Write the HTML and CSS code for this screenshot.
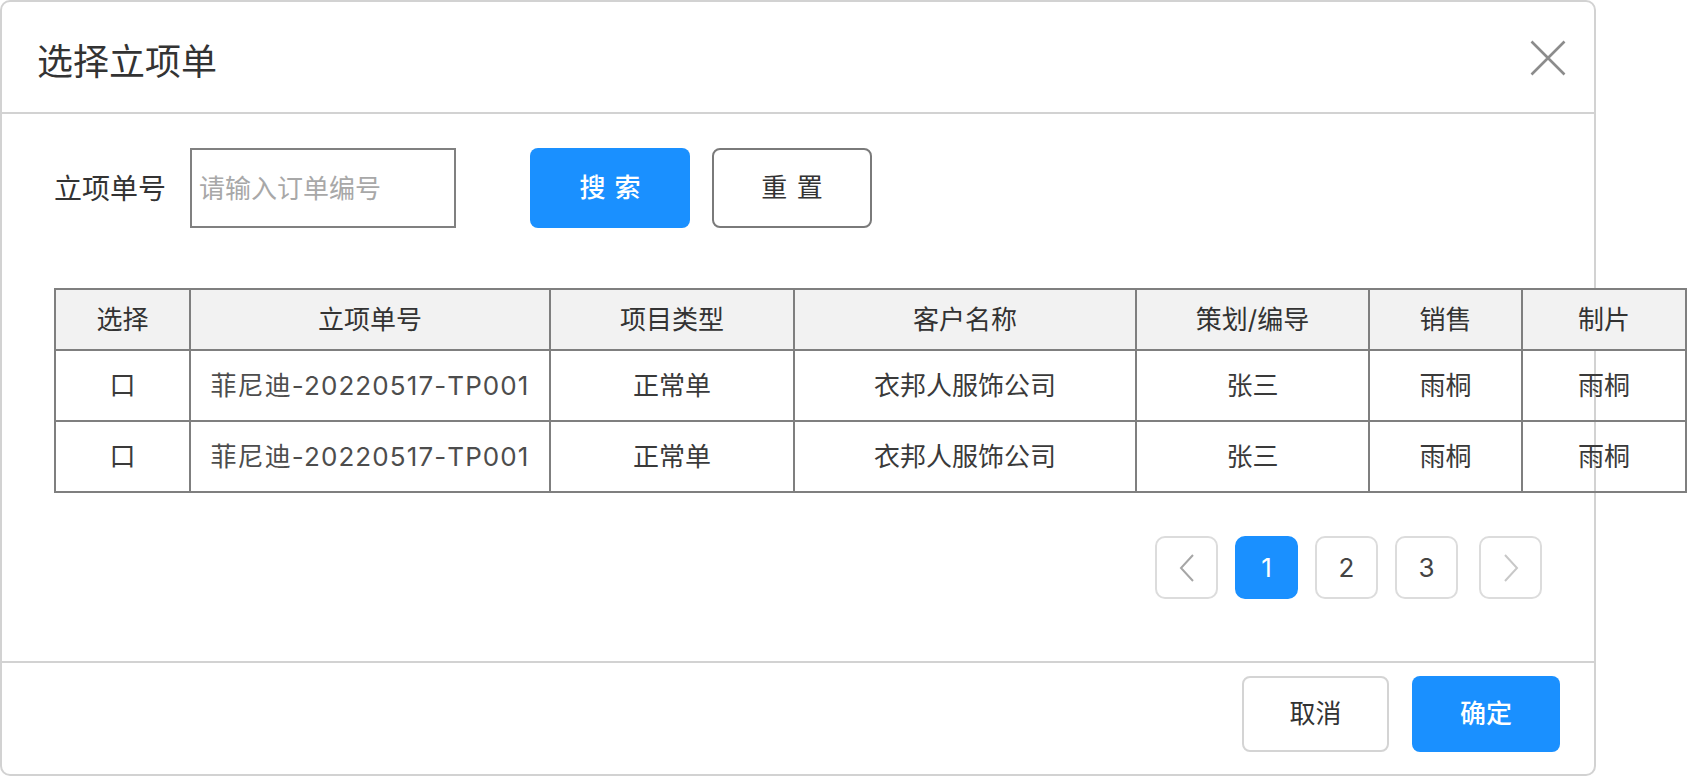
FILE: index.html
```html
<!DOCTYPE html>
<html lang="zh-CN">
<head>
<meta charset="utf-8">
<title>选择立项单</title>
<link rel="stylesheet" href="styles.css">
</head>
<body>
<div class="dialog">
  <div class="dialog-header">
    <h2 class="dialog-title">选择立项单</h2>
    <button class="close-btn" aria-label="关闭">
      <svg width="36" height="36" viewBox="0 0 36 36"><path d="M1.5 1.5 L34.5 34.5 M34.5 1.5 L1.5 34.5" stroke="#8c8c8c" stroke-width="2.6" fill="none"/></svg>
    </button>
  </div>
  <div class="dialog-body">
    <div class="search-row">
      <label class="search-label">立项单号</label>
      <input class="search-input" type="text" placeholder="请输入订单编号">
      <button class="btn btn-primary btn-search">搜 索</button>
      <button class="btn btn-outline btn-reset">重 置</button>
    </div>
    <table class="data-table">
      <colgroup>
        <col class="c1"><col class="c2"><col class="c3"><col class="c4"><col class="c5"><col class="c6"><col class="c7">
      </colgroup>
      <thead>
        <tr><th>选择</th><th>立项单号</th><th>项目类型</th><th>客户名称</th><th>策划/编导</th><th>销售</th><th>制片</th></tr>
      </thead>
      <tbody>
        <tr><td class="check">口</td><td class="code">菲尼迪-20220517-TP001</td><td>正常单</td><td>衣邦人服饰公司</td><td>张三</td><td>雨桐</td><td>雨桐</td></tr>
        <tr><td class="check">口</td><td class="code">菲尼迪-20220517-TP001</td><td>正常单</td><td>衣邦人服饰公司</td><td>张三</td><td>雨桐</td><td>雨桐</td></tr>
      </tbody>
    </table>
    <div class="pagination">
      <button class="page-item page-prev" aria-label="上一页">
        <svg width="16" height="28" viewBox="0 0 16 28"><path d="M14 1 L2 14 L14 27" stroke="#a6a6a6" stroke-width="2" fill="none"/></svg>
      </button>
      <button class="page-item active">1</button>
      <button class="page-item">2</button>
      <button class="page-item">3</button>
      <button class="page-item page-next" aria-label="下一页">
        <svg width="16" height="28" viewBox="0 0 16 28"><path d="M2 1 L14 14 L2 27" stroke="#c8c8c8" stroke-width="2" fill="none"/></svg>
      </button>
    </div>
  </div>
  <div class="dialog-footer">
    <button class="btn btn-light btn-cancel">取消</button>
    <button class="btn btn-primary btn-confirm">确定</button>
  </div>
</div>
</body>
</html>
```
FILE: styles.css
```css
* { box-sizing: border-box; }
html, body { margin: 0; padding: 0; background: #fff; }
body {
  font-family: Inter, "Noto Sans CJK SC", sans-serif;
  color: #333;
  overflow: hidden;
}
button { font-family: inherit; cursor: pointer; }

.dialog {
  width: 1596px;
  height: 776px;
  border: 2px solid #d2d2d2;
  border-radius: 10px;
  background: #fff;
  display: flex;
  flex-direction: column;
}

.dialog-header {
  height: 112px;
  flex: none;
  border-bottom: 2px solid #d2d2d2;
  display: flex;
  align-items: center;
  justify-content: space-between;
  padding: 6px 28px 0 35px;
}
.dialog-title {
  margin: 0;
  font-size: 36px;
  font-weight: 400;
  line-height: 1;
  color: #333;
  margin-top: 4px;
}
.close-btn {
  border: 0;
  background: none;
  padding: 0;
  width: 36px;
  height: 36px;
  display: block;
  margin-bottom: 4px;
}
.close-btn svg { display: block; }

.dialog-body {
  flex: 1;
  padding: 34px 0 0 52px;
}

.search-row {
  display: flex;
  align-items: center;
  height: 80px;
}
.search-label {
  font-size: 28px;
  color: #333;
  line-height: 1;
  padding-top: 2px;
}
.search-input {
  margin-left: 24px;
  width: 266px;
  height: 80px;
  border: 2px solid #808080;
  border-radius: 0;
  padding: 0 0 0 7px;
  font-family: inherit;
  font-size: 26px;
  color: #333;
  outline: none;
}
.search-input::placeholder { color: #a8a8a8; }

.btn {
  border-radius: 8px;
  font-size: 26px;
  line-height: 1;
  padding: 0;
}
.btn-primary {
  background: #1a90ff;
  border: 0;
  color: #fff;
  font-weight: 500;
}
.btn-search {
  margin-left: 74px;
  width: 160px;
  height: 80px;
  word-spacing: 2px;
}
.btn-outline {
  background: #fff;
  border: 2px solid #7a7a7a;
  color: #333;
}
.btn-reset {
  margin-left: 22px;
  width: 160px;
  height: 80px;
  word-spacing: 2px;
}

.data-table {
  margin-top: 60px;
  width: 1633px;
  table-layout: fixed;
  border-collapse: separate;
  border-spacing: 0;
  border-top: 2px solid #7f7f7f;
  border-left: 2px solid #7f7f7f;
  font-size: 26px;
}
.data-table col.c1 { width: 135px; }
.data-table col.c2 { width: 360px; }
.data-table col.c3 { width: 244px; }
.data-table col.c4 { width: 342px; }
.data-table col.c5 { width: 233px; }
.data-table col.c6 { width: 153px; }
.data-table col.c7 { width: 164px; }
.data-table th,
.data-table td {
  border-right: 2px solid #7f7f7f;
  border-bottom: 2px solid #7f7f7f;
  padding: 0;
  text-align: center;
  vertical-align: middle;
  white-space: nowrap;
  line-height: 1.2;
}
.data-table th {
  background: #f2f2f2;
  font-weight: 400;
  color: #333;
}
.data-table thead tr { height: 61px; }
.data-table tbody tr { height: 71px; }
.data-table td { color: #3a3a3a; }
.data-table td.code { color: #4d4d4d; letter-spacing: 1.1px; }

.pagination {
  margin-top: 43px;
  display: flex;
  justify-content: flex-end;
  padding-right: 52px;
  gap: 17px;
}
.page-item {
  width: 63px;
  height: 63px;
  border: 2px solid #dcdcdc;
  border-radius: 10px;
  background: #fff;
  color: #444;
  font-size: 26px;
  line-height: 1;
  padding: 0;
  display: flex;
  align-items: center;
  justify-content: center;
}
.page-item.active {
  background: #1a90ff;
  border-color: #1a90ff;
  color: #fff;
}
.page-next { margin-left: 4px; }
.page-item svg { display: block; }

.dialog-footer {
  flex: none;
  height: 113px;
  border-top: 2px solid #d2d2d2;
  display: flex;
  justify-content: flex-end;
  align-items: flex-start;
  gap: 23px;
  padding: 13px 34px 0 0;
}
.btn-cancel {
  width: 147px;
  height: 76px;
  background: #fff;
  border: 2px solid #d4d4d4;
  color: #333;
}
.btn-confirm {
  width: 148px;
  height: 76px;
}
```
